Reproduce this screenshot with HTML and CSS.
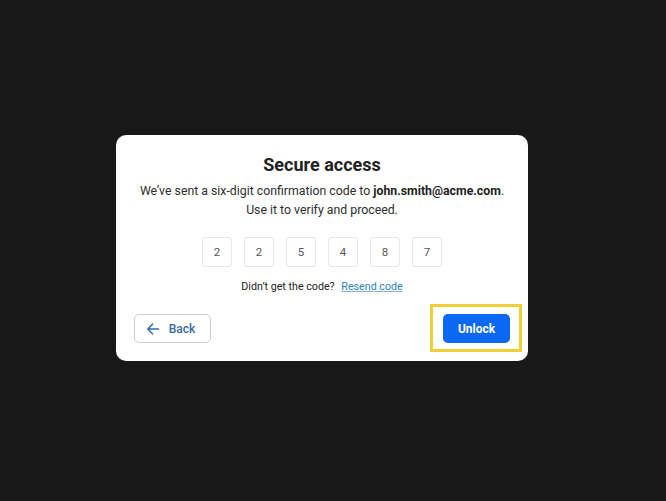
FILE: index.html
```html
<!DOCTYPE html>
<html lang="en">
<head>
<meta charset="utf-8">
<title>Secure access</title>
<link rel="stylesheet" href="styles.css">
</head>
<body>
<div class="stage">
  <div class="card">
    <h1 class="title">Secure access</h1>
    <p class="subtitle">We’ve sent a six-digit confirmation code to <strong>john.smith@acme.com</strong>.<br>Use it to verify and proceed.</p>
    <div class="codes">
      <div class="digit">2</div>
      <div class="digit">2</div>
      <div class="digit">5</div>
      <div class="digit">4</div>
      <div class="digit">8</div>
      <div class="digit">7</div>
    </div>
    <p class="resend">Didn’t get the code? <a class="resend-link" href="#">Resend code</a></p>
    <div class="actions">
      <button class="btn-back" type="button">
        <svg class="back-icon" width="14" height="14" viewBox="0 0 14 14" fill="none" stroke="currentColor" stroke-width="1.6" stroke-linecap="round" stroke-linejoin="round"><path d="M12.5 7H1.8M6.5 2.2L1.8 7l4.7 4.8"/></svg>
        <span>Back</span>
      </button>
      <div class="unlock-wrap">
        <button class="btn-unlock" type="button">Unlock</button>
        <span class="highlight"></span>
      </div>
    </div>
  </div>
</div>
</body>
</html>
```
FILE: styles.css
```css
html, body {
  margin: 0;
  padding: 0;
  background: #181818;
  height: 100%;
}
body {
  font-family: Roboto, "Liberation Sans", Arial, sans-serif;
}
.stage {
  padding: 135px 0 0 116px;
  display: flex;
}
.card {
  width: 412px;
  box-sizing: border-box;
  background: #ffffff;
  border-radius: 10px;
  padding: 19px 18px 18px 18px;
  display: flex;
  flex-direction: column;
  align-items: center;
}
.title {
  margin: 0;
  font-size: 18px;
  line-height: 22px;
  font-weight: 700;
  color: #222222;
}
.subtitle {
  margin: 6px 0 0;
  font-size: 12.3px;
  line-height: 19px;
  color: #2e2e2e;
  text-align: center;
}
.subtitle strong {
  font-weight: 700;
  color: #1f1f1f;
}
.codes {
  display: flex;
  gap: 12px;
  margin-top: 17px;
}
.digit {
  width: 30px;
  height: 30px;
  box-sizing: border-box;
  border: 1px solid #e6e6e6;
  border-radius: 3px;
  display: flex;
  align-items: center;
  justify-content: center;
  font-size: 11.5px;
  color: #555555;
}
.resend {
  margin: 12px 0 0;
  font-size: 10.7px;
  line-height: 16px;
  color: #222222;
}
.resend-link {
  margin-left: 4px;
  color: #2f7fc1;
  text-decoration: underline;
  text-decoration-color: #8bb4d9;
}
.actions {
  align-self: stretch;
  display: flex;
  justify-content: space-between;
  align-items: center;
  margin-top: 19px;
}
.btn-back {
  width: 77px;
  height: 29px;
  box-sizing: border-box;
  border: 1px solid #c7d0d9;
  border-radius: 5px;
  background: #ffffff;
  color: #3a6aa3;
  font-family: inherit;
  font-size: 12px;
  font-weight: 500;
  display: flex;
  align-items: center;
  justify-content: center;
  gap: 9px;
  padding: 0 4px 0 0;
}
.back-icon {
  color: #2f6db3;
}
.unlock-wrap {
  position: relative;
  display: flex;
}
.btn-unlock {
  width: 67px;
  height: 29px;
  border: none;
  border-radius: 5px;
  background: #0b68f2;
  color: #ffffff;
  font-family: inherit;
  font-size: 12px;
  font-weight: 700;
  padding: 0;
}
.highlight {
  position: absolute;
  top: -10px;
  left: -13px;
  right: -12px;
  bottom: -9px;
  border: 3px solid #f1cf36;
  pointer-events: none;
}
```
